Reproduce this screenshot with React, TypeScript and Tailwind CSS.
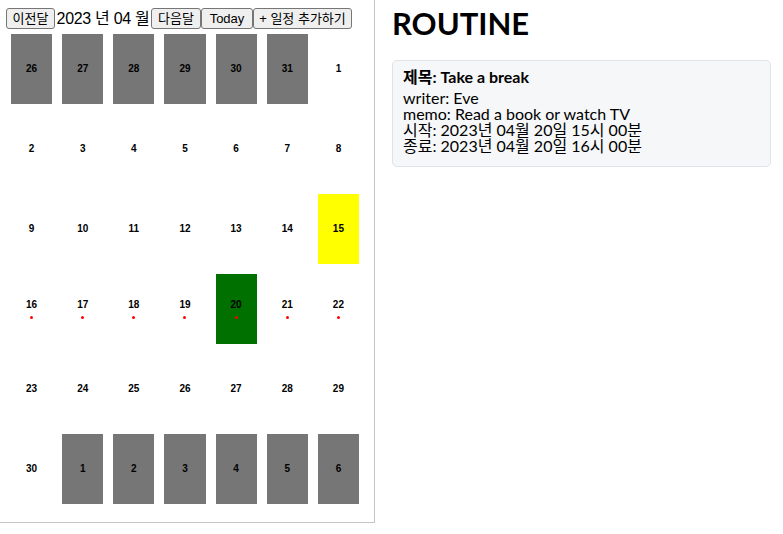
import React from 'react'

type Day = { n: number; other?: boolean; dot?: boolean }

const font = { fontFamily: '"Liberation Sans", "Noto Sans CJK KR", sans-serif' }
const korean = { fontFamily: 'Lato, "Noto Sans CJK KR", sans-serif' }

function buildDays(): Day[] {
    const days: Day[] = []
    for (let n = 26; n <= 31; n++) days.push({ n, other: true })
    for (let n = 1; n <= 30; n++) {
        days.push({ n, dot: n >= 16 && n <= 22 })
    }
    for (let n = 1; n <= 6; n++) days.push({ n, other: true })
    return days
}

function Btn({ children, className }: { children: React.ReactNode; className: string }) {
    return (
        <button className={`h-[21px] shrink-0 flex items-center justify-center bg-[#efefef] border border-[#767676] rounded-[3px] text-[13px] leading-[15px] text-black ${className}`}>
            {children}
        </button>
    )
}

function DayCell({ day }: { day: Day }) {
    let bg = ''
    if (day.other) bg = 'bg-[#767676]'
    else if (day.n === 15) bg = 'bg-[#ffff00]'
    else if (day.n === 20) bg = 'bg-[#007000]'
    return (
        <div className="h-[80px] p-[5px]">
            <div className={`h-full flex flex-col items-center justify-center ${bg}`}>
                <span className="text-[10px] font-bold leading-[12px] text-black">{day.n}</span>
                {day.dot && <span className="mt-[5px] w-[3px] h-[3px] bg-[#ff0000] rounded-full" />}
            </div>
        </div>
    )
}

export default function App() {
    const days = buildDays()

    return (
        <div className="flex w-[783px] h-[534px] bg-white text-black" style={font}>
            {/* Calendar */}
            <div className="w-[375px] h-[523px] shrink-0 border-r border-b border-[#c4c4c4] pl-[6px] pr-[10px] pt-[7px]">
                <div className="flex items-end h-[22px]">
                    <Btn className="w-[49px]">이전달</Btn>
                    <span className="w-[96px] text-center text-[16px] leading-[20px] tracking-[-0.3px]">2023 년 04 월</span>
                    <Btn className="w-[50px]">다음달</Btn>
                    <Btn className="w-[52px] text-[13.5px]">Today</Btn>
                    <Btn className="w-[99px]">+ 일정 추가하기</Btn>
                </div>
                <div className="grid grid-cols-7">
                    {days.map((d, i) => (
                        <DayCell key={i} day={d} />
                    ))}
                </div>
            </div>

            {/* Routine */}
            <div className="flex-1 pl-[17px] pr-[12px] pt-[3px]" style={korean}>
                <h1 className="text-[31px] font-bold leading-[40px] mb-[17px]">ROUTINE</h1>
                <div className="bg-[#f6f7f9] border border-[#e0e3e8] rounded-[5px] px-[10px] pt-[6px] pb-[12px] text-[16px] leading-[16px]">
                    <div className="font-bold mb-[3px] leading-[20px]">제목: Take a break</div>
                    <div>writer: Eve</div>
                    <div>memo: Read a book or watch TV</div>
                    <div>시작: 2023년 04월 20일 15시 00분</div>
                    <div>종료: 2023년 04월 20일 16시 00분</div>
                </div>
            </div>
        </div>
    )
}
